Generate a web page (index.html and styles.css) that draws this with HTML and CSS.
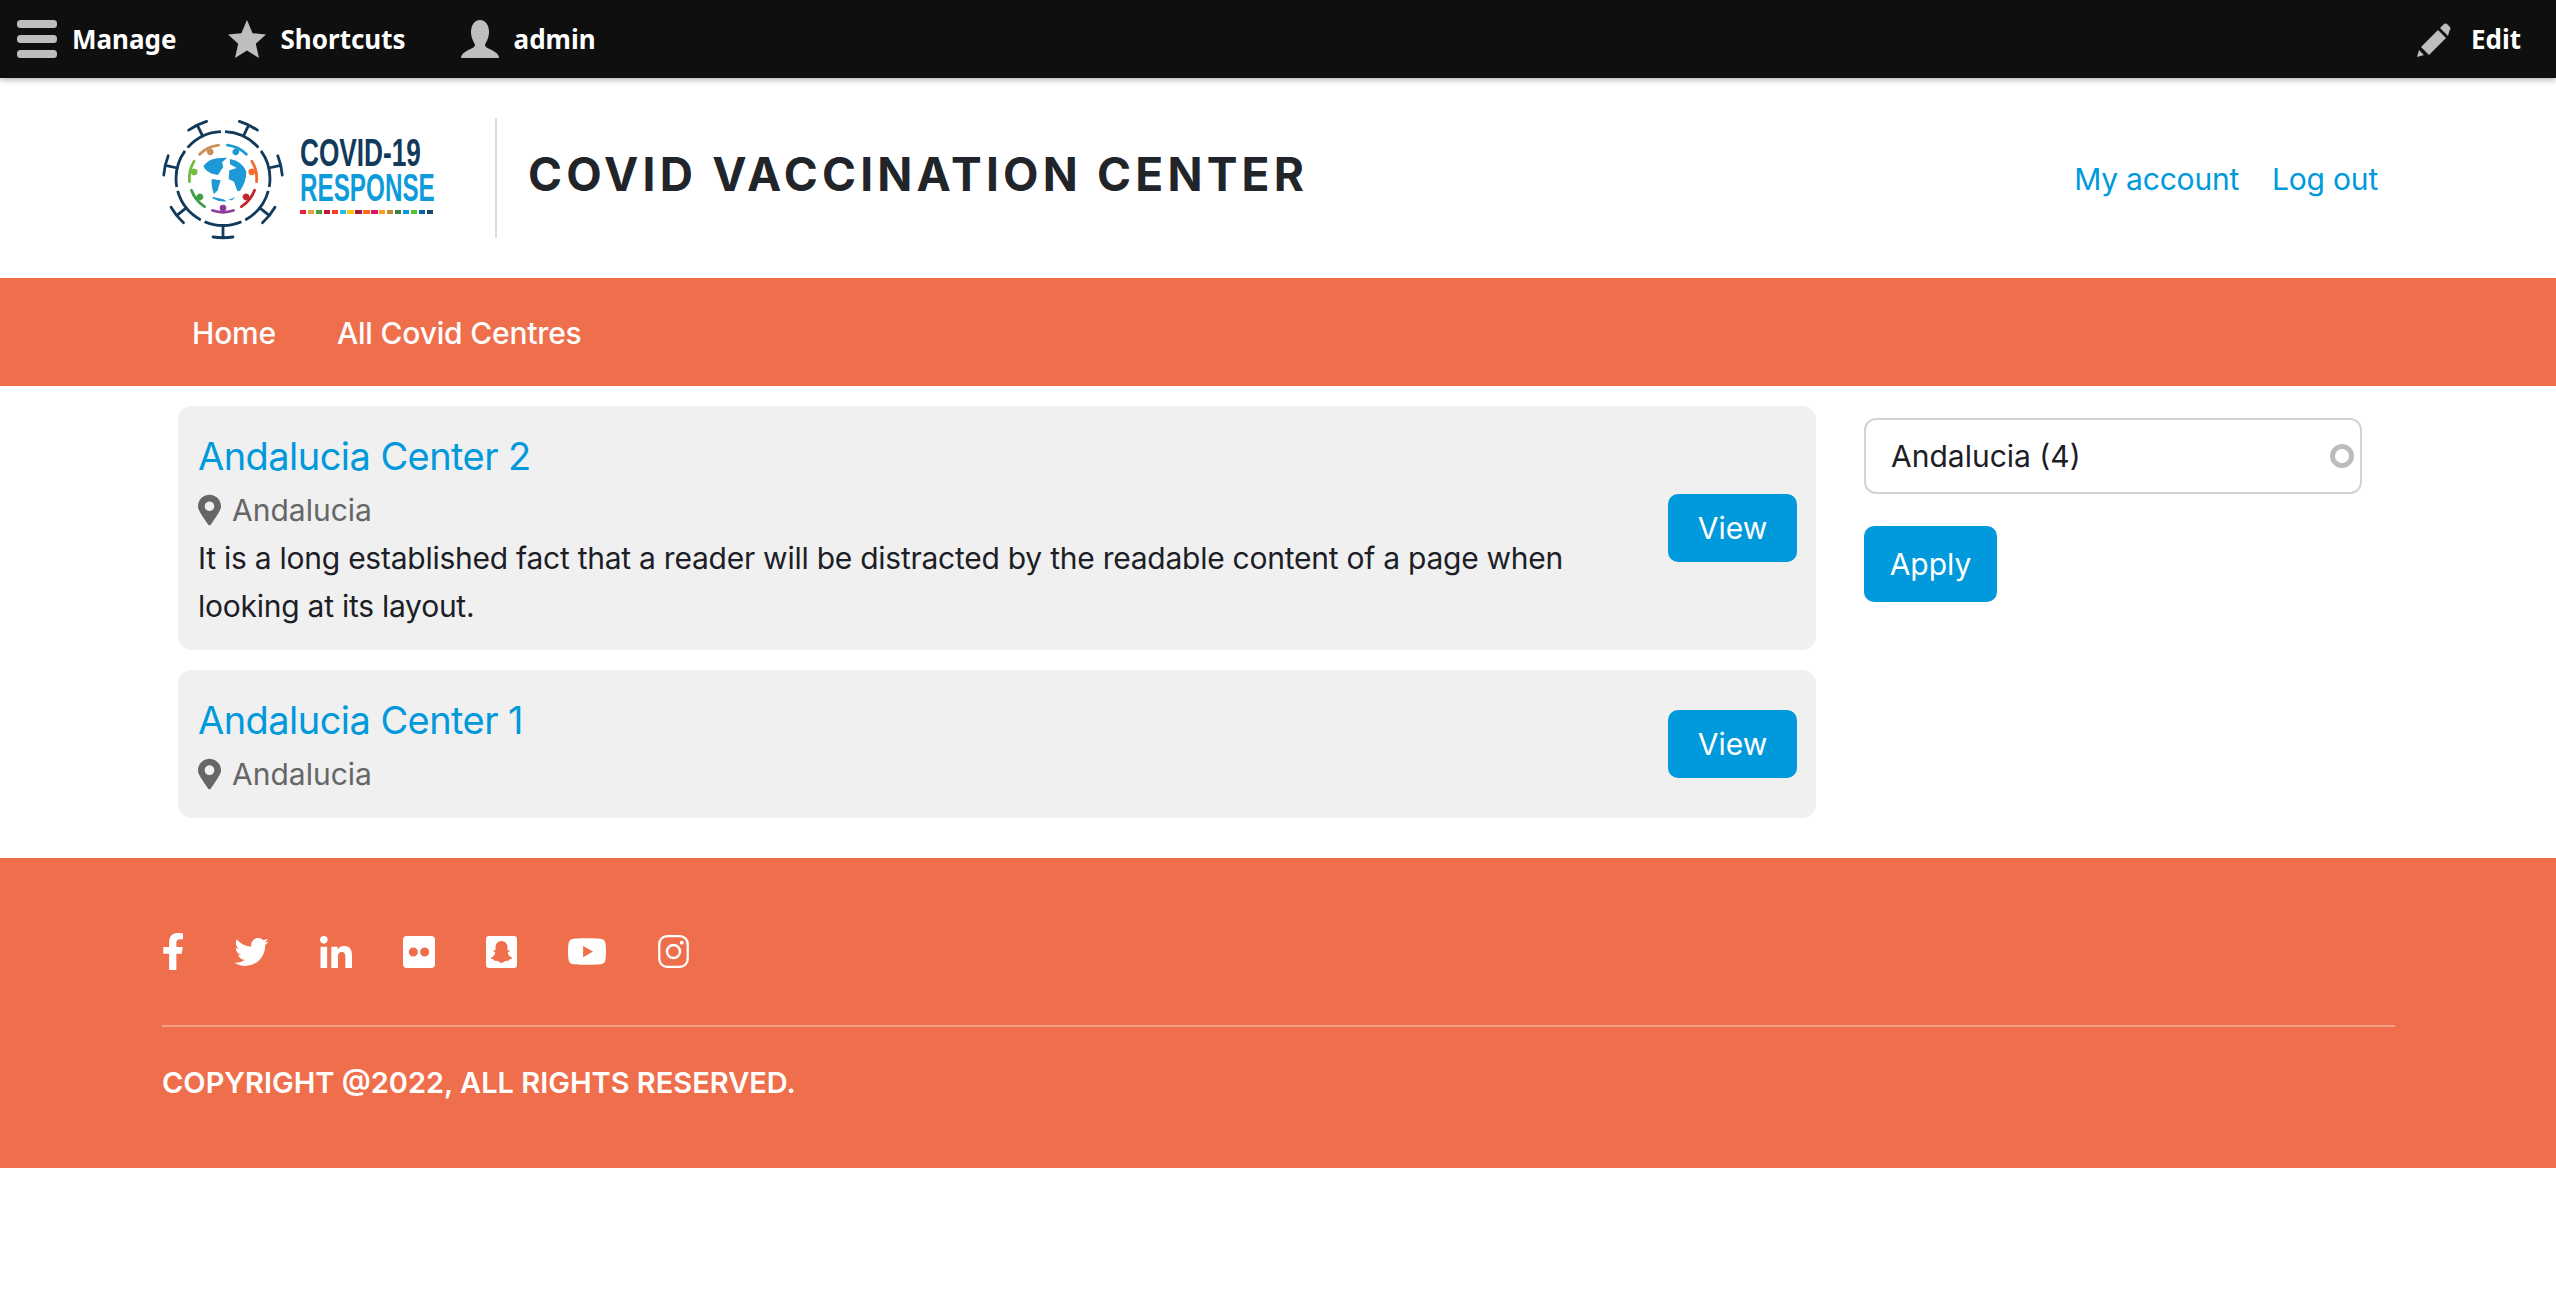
FILE: index.html
```html
<!DOCTYPE html>
<html lang="en">

<head>
    <meta charset="UTF-8">
    <meta name="viewport" content="width=device-width, initial-scale=1.0">
    <title>Covid Vaccination Center</title>
    <link rel="stylesheet" href="styles.css">
</head>

<body>
    <!-- admin toolbar -->
    <div class="toolbar">
        <a class="tool tool-manage" href="#">
            <svg class="tool-icon tool-icon-bars" viewBox="0 0 40 38"><rect y="0" width="40" height="8" rx="3.5"/><rect y="15" width="40" height="8" rx="3.5"/><rect y="30" width="40" height="8" rx="3.5"/></svg>
            Manage
        </a>
        <a class="tool tool-shortcuts" href="#">
            <svg class="tool-icon" viewBox="0 0 38 38"><path d="M19 0l5.6 13.2L38 14.500l-10.200 9.200L31 38 19 30.600 7 38l3.200-14.300L0 14.500l13.400-1.300z"/></svg>
            Shortcuts
        </a>
        <a class="tool" href="#">
            <svg class="tool-icon" viewBox="0 0 38 38"><path d="M19 0C25 0 28 6 28 12C28 18 25 22 24 25C24 28 30 29 34 32C37 34 38 36 38 38L0 38C0 36 1 34 4 32C8 29 14 28 14 25C13 22 10 18 10 12C10 6 13 0 19 0Z"/></svg>
            admin
        </a>
        <a class="tool tool-edit" href="#">
            <svg class="tool-icon tool-icon-pencil" viewBox="0 0 35 35"><path d="M0 35l2-7 5 5zM4 25L21 8l8 8-17 17zM23 6l3.500-3.500q2-2 4 0l2 2q2 2 0 4L31 14z"/></svg>
            Edit
        </a>
    </div>

    <!-- logo, site name, user links -->
    <header class="site-header">
        <svg class="logo-mark" viewBox="162 112 122 126">
            <defs>
                <g id="spike" fill="none" stroke="#123a5a" stroke-width="2.800" stroke-linecap="round">
                    <path d="M0 -47V-59M-10 -58.500Q0 -60 10 -58.500"/>
                </g>
                <g id="person">
                    <path d="M-10.500 -32Q0 -35.500 10.500 -32" fill="none" stroke="currentColor" stroke-width="2.800" stroke-linecap="round"/>
                    <circle cx="0" cy="-29.500" r="3.300" fill="currentColor"/>
                </g>
            </defs>
            <g transform="translate(223 175.500)">
                <circle class="logo-ring" r="47" pathLength="70" transform="rotate(-90)"/>
                <use href="#spike" transform="rotate(25.700)"/>
                <use href="#spike" transform="rotate(77.100)"/>
                <use href="#spike" transform="rotate(128.600)"/>
                <use href="#spike" transform="rotate(180)"/>
                <use href="#spike" transform="rotate(231.400)"/>
                <use href="#spike" transform="rotate(282.900)"/>
                <use href="#spike" transform="rotate(334.300)"/>
                <use href="#person" color="#1d9ad6" transform="rotate(25.700)"/>
                <use href="#person" color="#f26a2e" transform="rotate(77.100)"/>
                <use href="#person" color="#c4242b" transform="rotate(128.600)"/>
                <use href="#person" color="#8e3a9d" transform="rotate(180)"/>
                <use href="#person" color="#3f9f48" transform="rotate(231.400)"/>
                <use href="#person" color="#76bb3f" transform="rotate(282.900)"/>
                <use href="#person" color="#c98f56" transform="rotate(334.300)"/>
            </g>
            <!-- globe, drawn in the coordinates of the 3x crop -->
            <g transform="translate(130 100) scale(.3333)" fill="#1d9ad6">
                <path d="M220 190Q236 168 262 166L292 164 276 178 280 192 264 216 246 212Q228 206 220 190Z"/>
                <path d="M245 228L272 232 263 262 252 274Q243 250 245 228Z"/>
                <path d="M300 168Q336 174 349 206 349 236 330 264L322 264 312 236 296 228 298 202 320 195 300 184Z"/>
                <path d="M245 285Q268 298 290 295L280 289 250 282ZM295 291L316 282 306 292Z"/>
            </g>
        </svg>
        <div class="logo-text">
            <div class="logo-covid">COVID-19</div>
            <div class="logo-response">RESPONSE</div>
            <div class="logo-colours">
                <i style="background-color: #e5243b"></i>
                <i style="background-color: #dda63a"></i>
                <i style="background-color: #4c9f38"></i>
                <i style="background-color: #c5192d"></i>
                <i style="background-color: #ff3a21"></i>
                <i style="background-color: #26bde2"></i>
                <i style="background-color: #fcc30b"></i>
                <i style="background-color: #a21942"></i>
                <i style="background-color: #fd6925"></i>
                <i style="background-color: #dd1367"></i>
                <i style="background-color: #fd9d24"></i>
                <i style="background-color: #bf8b2e"></i>
                <i style="background-color: #3f7e44"></i>
                <i style="background-color: #0a97d9"></i>
                <i style="background-color: #56c02b"></i>
                <i style="background-color: #00689d"></i>
                <i style="background-color: #19486a"></i>
            </div>
        </div>
        <div class="logo-sep"></div>
        <div class="site-name">COVID VACCINATION CENTER</div>
        <nav class="user-links">
            <a href="#">My account</a>
            <a href="#">Log out</a>
        </nav>
    </header>

    <!-- main menu -->
    <nav class="main-nav">
        <a href="#">Home</a>
        <a href="#">All Covid Centres</a>
    </nav>

    <div class="content">
        <!-- centre list -->
        <div class="centres">
            <div class="centre">
                <div class="centre-info">
                    <h2><a href="#">Andalucia Center 2</a></h2>
                    <div class="centre-place">
                        <svg viewBox="0 0 384 512"><path d="M172.268 501.670C26.970 291.031 0 248.001 0 192 0 85.961 85.961 0 192 0s192 85.961 192 192c0 56.001-26.970 99.031-172.268 309.670-9.535 13.774-29.930 13.773-39.464 0zM192 272c44.183 0 80-35.817 80-80s-35.817-80-80-80-80 35.817-80 80 35.817 80 80 80z"/></svg>
                        Andalucia
                    </div>
                    <p>It is a long established fact that a reader will be distracted by the readable content of a page when looking at its layout.</p>
                </div>
                <a class="btn btn-view" href="#">View</a>
            </div>
            <div class="centre">
                <div class="centre-info">
                    <h2><a href="#">Andalucia Center 1</a></h2>
                    <div class="centre-place">
                        <svg viewBox="0 0 384 512"><path d="M172.268 501.670C26.970 291.031 0 248.001 0 192 0 85.961 85.961 0 192 0s192 85.961 192 192c0 56.001-26.970 99.031-172.268 309.670-9.535 13.774-29.930 13.773-39.464 0zM192 272c44.183 0 80-35.817 80-80s-35.817-80-80-80-80 35.817-80 80 35.817 80 80 80z"/></svg>
                        Andalucia
                    </div>
                </div>
                <a class="btn btn-view" href="#">View</a>
            </div>
        </div>

        <!-- filter -->
        <form class="filter">
            <div class="filter-field">
                <span>Andalucia (4)</span>
                <i class="throbber"></i>
            </div>
            <a class="btn btn-apply" href="#">Apply</a>
        </form>
    </div>

    <footer class="site-footer">
        <div class="social">
            <svg class="social-f" viewBox="22 0 272 512"><path d="M279.140 288l14.220-92.660h-88.910v-60.130c0-25.350 12.420-50.060 52.240-50.060h40.420V6.260S260.430 0 225.360 0c-73.220 0-121.080 44.380-121.080 124.720v70.620H22.890V288h81.390v224h100.170V288z"/></svg>
            <svg class="social-tw" viewBox="0 32 512 448"><path d="M459.370 151.716c.325 4.548.325 9.097.325 13.645 0 138.720-105.583 298.558-298.558 298.558-59.452 0-114.680-17.219-161.137-47.106 8.447.974 16.568 1.299 25.340 1.299 49.055 0 94.213-16.568 130.274-44.832-46.132-.975-84.792-31.188-98.112-72.772 6.498.974 12.995 1.624 19.818 1.624 9.421 0 18.843-1.300 27.614-3.573-48.081-9.747-84.143-51.980-84.143-102.985v-1.299c13.969 7.797 30.214 12.670 47.431 13.319-28.264-18.843-46.781-51.005-46.781-87.391 0-19.492 5.197-37.360 14.294-52.954 51.655 63.675 129.300 105.258 216.365 109.807-1.624-7.797-2.599-15.918-2.599-24.040 0-57.828 46.782-104.934 104.934-104.934 30.213 0 57.502 12.670 76.670 33.137 23.715-4.548 46.456-13.320 66.599-25.340-7.798 24.366-24.366 44.833-46.132 57.827 21.117-2.273 41.584-8.122 60.426-16.243-14.292 20.791-32.161 39.308-52.628 54.253z"/></svg>
            <svg class="social-in" viewBox="0 0 448 448"><path d="M100.280 448H7.400V148.900h92.880zM53.790 108.100C24.090 108.100 0 83.500 0 53.800a53.790 53.790 0 0 1 107.580 0c0 29.700-24.100 54.300-53.790 54.300zM447.900 448h-92.680V302.400c0-34.700-.7-79.200-48.290-79.200-48.290 0-55.690 37.700-55.690 76.700V448h-92.780V148.900h89.080v40.800h1.300c12.400-23.500 42.690-48.300 87.880-48.300 94 0 111.280 61.900 111.280 142.300V448z"/></svg>
            <svg class="social-fl" viewBox="0 32 448 448"><path d="M400 32H48C21.500 32 0 53.500 0 80v352c0 26.500 21.500 48 48 48h352c26.500 0 48-21.500 48-48V80c0-26.500-21.500-48-48-48zM144.500 319c-35.100 0-63.500-28.400-63.500-63.500s28.400-63.500 63.500-63.500 63.500 28.400 63.500 63.500-28.400 63.500-63.500 63.500zm159 0c-35.100 0-63.500-28.400-63.500-63.500s28.400-63.500 63.500-63.500 63.500 28.400 63.500 63.500-28.400 63.500-63.500 63.500z"/></svg>
            <svg class="social-sn" viewBox="0 0 31 32"><path fill-rule="evenodd" d="M3 0H28Q31 0 31 3V29Q31 32 28 32H3Q0 32 0 29V3Q0 0 3 0ZM15.500 5C19.500 5 21.500 8 21.500 11.500L21.400 14C22 14.500 23.200 13.800 23.600 14.400C24 15.200 22.500 15.800 21.800 16.200C21.600 18.500 24 21 25.800 21.600C26.400 21.800 26.200 22.500 25.600 22.800C24.800 23.200 23.800 23.200 23.200 23.600C22.900 24.200 23 24.800 22.400 24.800C21 24.700 19.600 24.600 18.400 25.400C17.400 26.100 16.600 26.800 15.500 26.800C14.400 26.800 13.600 26.100 12.600 25.400C11.400 24.600 10 24.700 8.600 24.800C8 24.800 8.100 24.200 7.800 23.600C7.200 23.200 6.200 23.200 5.400 22.800C4.800 22.500 4.600 21.800 5.200 21.600C7 21 9.400 18.500 9.200 16.200C8.500 15.800 7 15.200 7.400 14.400C7.800 13.800 9 14.500 9.600 14L9.500 11.500C9.500 8 11.500 5 15.500 5Z"/></svg>
            <svg class="social-yt" viewBox="15 64 546 384"><path d="M549.655 124.083c-6.281-23.650-24.787-42.276-48.284-48.597C458.781 64 288 64 288 64S117.220 64 74.629 75.486c-23.497 6.322-42.003 24.947-48.284 48.597-11.412 42.867-11.412 132.305-11.412 132.305s0 89.438 11.412 132.305c6.281 23.650 24.787 41.500 48.284 47.821C117.220 448 288 448 288 448s170.780 0 213.371-11.486c23.497-6.321 42.003-24.171 48.284-47.821 11.412-42.867 11.412-132.305 11.412-132.305s0-89.438-11.412-132.305zm-317.510 213.508V175.185l142.739 81.205-142.739 81.201z"/></svg>
            <svg class="social-ig" viewBox="0 0 30 32"><rect x="1.200" y="1.200" width="27.600" height="29.600" rx="7.500" fill="none" stroke="#fff" stroke-width="2.200"/><circle cx="15" cy="16" r="6.300" fill="none" stroke="#fff" stroke-width="2.400"/><circle cx="23" cy="7.500" r="1.900"/></svg>
        </div>
        <div class="copyright">COPYRIGHT @2022, ALL RIGHTS RESERVED.</div>
    </footer>
</body>

</html>
```

FILE: styles.css
```css
body {
    margin: 0;
    background-color: #ffffff;
    font-family: Inter, "Liberation Sans", sans-serif;
    font-size: 30px;
    color: #1c2026;
}

a {
    color: #0099dc;
    text-decoration: none;
}

/* toolbar */
.toolbar {
    display: flex;
    align-items: center;
    height: 78px;
    padding-left: 17px;
    padding-right: 35px;
    background-color: #0f0f0f;
    box-shadow: 0 2px 6px rgba(0,0,0,0.3);
    position: relative;
}

.tool {
    display: flex;
    align-items: center;
    gap: 15px;
    color: #ffffff;
    font-family: "Noto Sans", sans-serif;
    font-size: 26px;
    font-weight: 700;
}

.tool-manage {
    margin-right: 51px;
}

.tool-shortcuts {
    margin-right: 55px;
}

.tool-edit {
    margin-left: auto;
    gap: 19px;
}

.tool-icon {
    width: 38px;
    height: 38px;
    fill: #bebebe;
}

.tool-icon-bars {
    width: 40px;
}

.tool-icon-pencil {
    width: 35px;
    height: 35px;
}

/* header */
.site-header {
    display: flex;
    align-items: center;
    height: 200px;
    padding-left: 162px;
    padding-right: 178px;
}

.logo-mark {
    width: 122px;
    height: 126px;
    flex: none;
}

.logo-ring {
    fill: none;
    stroke: #123a5a;
    stroke-width: 2.8px;
    stroke-dasharray: 9 1;
    stroke-dashoffset: -0.5;
}

.logo-text {
    width: 133px;
    flex: none;
    margin-left: 16px;
    margin-bottom: 6px;
    font-family: "Liberation Sans", sans-serif;
    font-size: 38px;
    font-weight: 700;
    line-height: 35px;
    white-space: nowrap;
}

.logo-covid {
    color: #123a5a;
    transform: scaleX(0.69);
    transform-origin: left;
}

.logo-response {
    color: #0d9bdb;
    transform: scaleX(0.638);
    transform-origin: left;
}

.logo-colours {
    display: flex;
    gap: 1.5px;
    height: 4px;
    margin-top: 4px;
}

.logo-colours i {
    flex: 1;
}

.logo-sep {
    width: 2px;
    height: 120px;
    flex: none;
    margin-left: 62px;
    background-color: #dcdcdc;
}

.site-name {
    margin-left: 31px;
    margin-bottom: 8px;
    font-size: 46px;
    font-weight: 700;
    letter-spacing: 4.2px;
    color: #212529;
}

.user-links {
    display: flex;
    gap: 33px;
    margin-left: auto;
    margin-top: 2px;
    font-size: 30px;
    letter-spacing: -0.2px;
}

/* main menu */
.main-nav {
    display: flex;
    align-items: center;
    gap: 61px;
    height: 108px;
    padding-left: 192px;
    padding-top: 1px;
    box-sizing: border-box;
    background-color: #ef6e4b;
    font-size: 30px;
    font-weight: 500;
    letter-spacing: -0.2px;
}

.main-nav a {
    color: #ffffff;
}

/* centre list */
.content {
    display: flex;
    align-items: flex-start;
    gap: 48px;
    height: 472px;
    padding-top: 20px;
    padding-left: 178px;
    box-sizing: border-box;
}

.centres {
    display: flex;
    flex-direction: column;
    gap: 20px;
    width: 1638px;
}

.centre {
    display: flex;
    align-items: center;
    justify-content: space-between;
    padding: 20px;
    background-color: #f0f0f0;
    border-radius: 14px;
}

.centre-info {
    width: 1400px;
}

.centre h2 {
    margin: 0;
    font-size: 38px;
    font-weight: 400;
    line-height: 60px;
    letter-spacing: -0.55px;
}

.centre-place {
    display: flex;
    align-items: center;
    gap: 11px;
    height: 48px;
    color: #666666;
}

.centre-place svg {
    width: 23px;
    height: 32px;
    fill: #666666;
}

.centre p {
    margin: 0;
    line-height: 48px;
    letter-spacing: -0.25px;
}

.btn {
    display: flex;
    align-items: center;
    justify-content: center;
    background-color: #0099dc;
    color: #ffffff;
    border-radius: 10px;
}

.btn-view {
    width: 129px;
    height: 68px;
    margin-right: -1px;
}

/* filter */
.filter {
    width: 498px;
    padding-top: 12px;
}

.filter-field {
    display: flex;
    align-items: center;
    justify-content: space-between;
    height: 76px;
    padding-left: 25px;
    padding-right: 6px;
    border: 2px solid #cfd3da;
    border-radius: 12px;
    box-sizing: border-box;
}

.throbber {
    width: 14px;
    height: 14px;
    border: 5px solid #bcbcbc;
    border-radius: 50%;
}

.btn-apply {
    width: 133px;
    height: 76px;
    margin-top: 32px;
}

/* footer */
.site-footer {
    height: 310px;
    padding: 75px 161px 0 162px;
    background-color: #ef6e4b;
    box-sizing: border-box;
    color: #ffffff;
}

.social {
    display: flex;
    align-items: center;
    height: 37px;
    padding-left: 1px;
    padding-bottom: 55px;
    border-bottom: 2px solid rgba(255,255,255,0.35);
    gap: 51px;
    box-sizing: content-box;
}

.social svg {
    fill: #ffffff;
}

.social-f { width: 20px; height: 37px; }
.social-tw { width: 35px; height: 30px; }
.social-in { width: 32px; height: 32px; }
.social-fl { width: 32px; height: 32px; }
.social-sn { width: 31px; height: 32px; }
.social-yt { width: 38px; height: 27px; margin-right: 1px; }
.social-ig { width: 31px; height: 33px; }

.copyright {
    margin-top: 38px;
    font-size: 29px;
    font-weight: 600;
}
```
